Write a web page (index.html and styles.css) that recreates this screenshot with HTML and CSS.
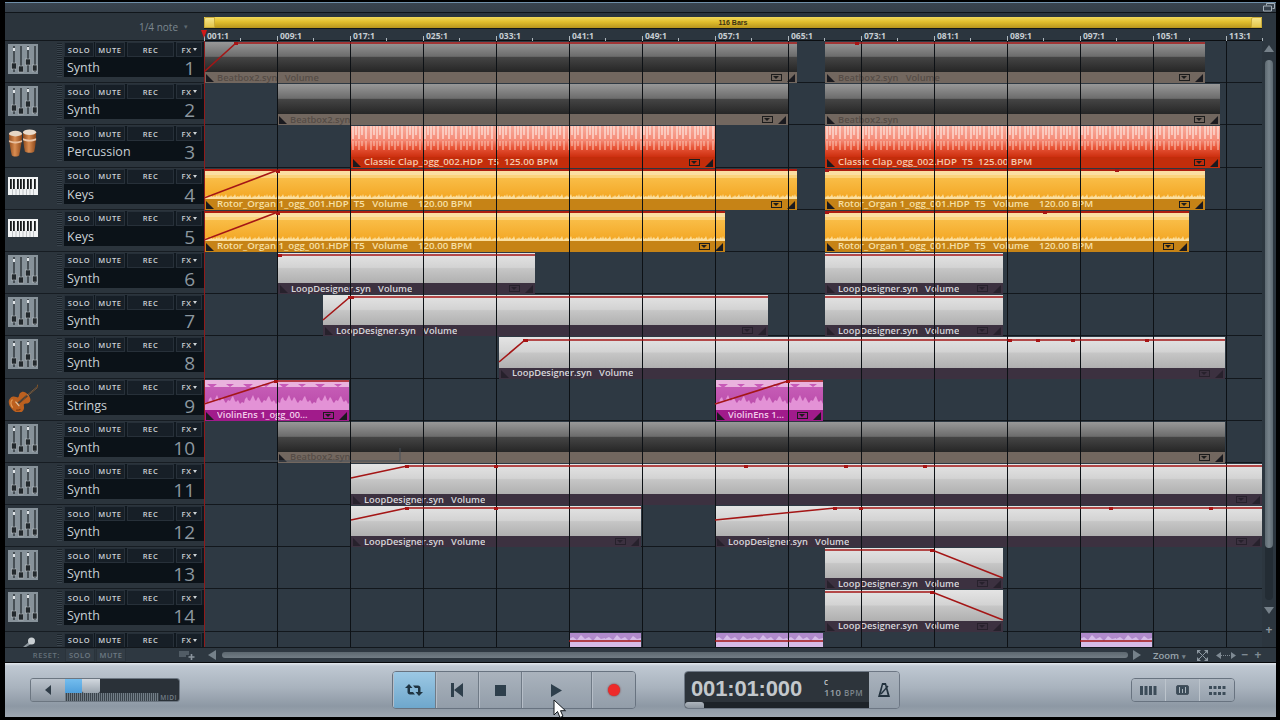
FILE: index.html
```html
<!DOCTYPE html>
<html lang="en">
<head>
<meta charset="utf-8">
<title>Sequencer</title>
<link rel="stylesheet" href="styles.css">
</head>
<body>
<svg class="defs" width="0" height="0" aria-hidden="true">
  <defs>
    <linearGradient id="g-drum" x1="0" x2="1" y1="0" y2="0"><stop offset="0" stop-color="#8f4a1c"/><stop offset=".45" stop-color="#d98d52"/><stop offset="1" stop-color="#8a4518"/></linearGradient>
    <symbol id="i-synth" viewBox="0 0 30 30">
      <rect width="30" height="30" fill="#87929a"/>
      <g stroke="#2c3338" stroke-width="1.4"><path d="M6 2v26M13 2v26M20 2v26M27 2v26"/></g>
      <g fill="#23292d" stroke="#c8ced2" stroke-width=".5"><rect x="3.5" y="19" width="5" height="6"/><rect x="10.5" y="22" width="5" height="6"/><rect x="17.5" y="15" width="5" height="6"/><rect x="24.5" y="21" width="4.5" height="6"/></g>
      <g fill="#dfe3e6"><rect x="5" y="4" width="2" height="3"/><rect x="19" y="3" width="2" height="3"/></g>
    </symbol>
    <symbol id="i-perc" viewBox="0 0 32 30">
      <path d="M1 6c0-4 14-4 14 0 0 8-2 17-3 22-1 2-7 2-8 0C3 23 1 14 1 6z" fill="url(#g-drum)"/>
      <ellipse cx="8" cy="5" rx="7" ry="3" fill="#e6d6c4"/>
      <path d="M1 12c4 2 10 2 14 0v2c-4 2-10 2-14 0z" fill="#e8c0a0"/>
      <path d="M16 4c0-4 14-4 14 0 0 8-1 15-2 20-1 2-8 2-10 0-1-5-2-12-2-20z" fill="url(#g-drum)"/>
      <ellipse cx="23" cy="3.500" rx="7" ry="3" fill="#eadccc"/>
      <path d="M16 10c4 2 10 2 14 0v2c-4 2-10 2-14 0z" fill="#ecc8ac"/>
    </symbol>
    <symbol id="i-keys" viewBox="0 0 30 18">
      <rect width="30" height="18" fill="#f2f4f5"/>
      <g fill="#15181a"><rect x="2" y="2" width="1.800" height="10"/><rect x="5" y="2" width="1.800" height="10"/><rect x="9" y="2" width="1.800" height="10"/><rect x="12" y="2" width="1.800" height="10"/><rect x="15" y="2" width="1.800" height="10"/><rect x="19" y="2" width="1.800" height="10"/><rect x="22" y="2" width="1.800" height="10"/><rect x="26" y="2" width="1.800" height="10"/></g>
      <path d="M4.500 12v6M8 12v6M11.500 12v6M15 12v6M18.500 12v6M22 12v6M25.500 12v6" stroke="#8b9194" stroke-width=".5"/>
    </symbol>
    <symbol id="i-violin" viewBox="0 0 30 30">
      <g transform="translate(-1 3) rotate(50 15 15)">
        <rect x="14" y="-6" width="2" height="16" fill="#3a2412"/>
        <circle cx="15" cy="-7" r="1.700" fill="#8c5a2a"/>
        <path d="M15 7c-5 0-7 2-6.500 5.500.2 1.400 2 2.300 2 3.700 0 1.100-4.500 1.800-4.500 6 0 4.300 4.300 6.300 9 6.300s9-2 9-6.300c0-4.200-4.500-4.900-4.500-6 0-1.400 1.800-2.300 2-3.700C22 9 20 7 15 7z" fill="#bc601f"/>
        <path d="M8.500 22c0 3 3 5 6.500 5" stroke="#e39a55" stroke-width="1.200" fill="none"/>
        <path d="M21 22c0 2-1 3-2 4" stroke="#7e3c10" stroke-width="1.200" fill="none"/>
        <path d="M14 8h2v12h-2z" fill="#2c1a0c"/>
        <path d="M12 21h6" stroke="#e0c9a8" stroke-width="1"/>
        <path d="M14.500 -5v26M15.500 -5v26" stroke="#cfc6b6" stroke-width=".3"/>
      </g>
    </symbol>
    <pattern id="p-orange" width="24" height="8" patternUnits="userSpaceOnUse">
      <path d="M0 6 1 4 2 5 3 3 4 5 6 4 7 2 8 5 10 4 11 5 13 3 14 5 15 2 16 5 18 3 19 5 21 4 22 2 23 5 24 6V7H0z" fill="#fbdf9f"/>
    </pattern>
    <pattern id="p-red" width="18" height="32" patternUnits="userSpaceOnUse">
      <path d="M2 0v13M5 0v9M8 0v13M11 0v9M15 0v13" stroke="#fde0d8" stroke-width="1.300"/>
      <path d="M2 15v9M5 15v5M8 15v9M11 15v5M15 15v9" stroke="#fbc0ae" stroke-width="1.100"/>
    </pattern>
    <pattern id="p-pink" width="36" height="31" patternUnits="userSpaceOnUse">
      <path d="M0 31V24L2 22 4 23 5 19 7 17 8 20 10 21 12 17 13 15 15 20 16 21 18 17 19 18 21 22 22 23 24 20 26 21 28 17 29 16 31 21 32 22 34 20 36 24V31z" fill="#e392d6"/>
      <path d="M3 4l5 4 5-4M22 4l4 3 4-3" fill="#c85ab8"/>
    </pattern>
    <pattern id="p-purple" width="36" height="15" patternUnits="userSpaceOnUse">
      <path d="M0 15V6L4 4 8 7 12 2 16 6 20 4 24 8 28 3 32 6 36 5V15z" fill="#d6bce8"/>
    </pattern>
  </defs>
</svg>

<div class="app">
  <header class="titlebar">
    <svg class="win-icon" viewBox="0 0 12 9" width="12" height="9"><path d="M3.500 2.500V.5h8v5h-2M.5 3h8v5h-8z" fill="none" stroke="#a5b0b9"/></svg>
  </header>

  <div class="head-row">
    <div class="corner"><span class="note">1/4 note</span><span class="caret">▾</span></div>
    <div class="ruler-wrap">
      <div class="loop">
        <span class="loop-end"></span>
        <span class="loop-bars">116 Bars</span>
        <span class="loop-end"></span>
      </div>
      <div class="ruler">
        <span>001:1</span><span>009:1</span><span>017:1</span><span>025:1</span><span>033:1</span><span>041:1</span><span>049:1</span><span>057:1</span><span>065:1</span><span>073:1</span><span>081:1</span><span>089:1</span><span>097:1</span><span>105:1</span><span>113:1</span>
        <i class="playhead-cap"></i>
      </div>
    </div>
    <div class="head-side"></div>
  </div>

  <div class="main">
    <div class="tracks">
      <div class="track"><div class="ticon"><svg class="ic"><use href="#i-synth"/></svg></div><div class="meter"></div><div class="ctl"><div class="btns"><button>SOLO</button><button>MUTE</button><button class="w">REC</button><button class="fx">FX</button></div><div class="nm"><span>Synth</span><b>1</b></div></div></div>
      <div class="track"><div class="ticon"><svg class="ic"><use href="#i-synth"/></svg></div><div class="meter"></div><div class="ctl"><div class="btns"><button>SOLO</button><button>MUTE</button><button class="w">REC</button><button class="fx">FX</button></div><div class="nm"><span>Synth</span><b>2</b></div></div></div>
      <div class="track"><div class="ticon"><svg class="ic"><use href="#i-perc"/></svg></div><div class="meter"></div><div class="ctl"><div class="btns"><button>SOLO</button><button>MUTE</button><button class="w">REC</button><button class="fx">FX</button></div><div class="nm"><span>Percussion</span><b>3</b></div></div></div>
      <div class="track"><div class="ticon"><svg class="ic ic-k"><use href="#i-keys"/></svg></div><div class="meter"></div><div class="ctl"><div class="btns"><button>SOLO</button><button>MUTE</button><button class="w">REC</button><button class="fx">FX</button></div><div class="nm"><span>Keys</span><b>4</b></div></div></div>
      <div class="track"><div class="ticon"><svg class="ic ic-k"><use href="#i-keys"/></svg></div><div class="meter"></div><div class="ctl"><div class="btns"><button>SOLO</button><button>MUTE</button><button class="w">REC</button><button class="fx">FX</button></div><div class="nm"><span>Keys</span><b>5</b></div></div></div>
      <div class="track"><div class="ticon"><svg class="ic"><use href="#i-synth"/></svg></div><div class="meter"></div><div class="ctl"><div class="btns"><button>SOLO</button><button>MUTE</button><button class="w">REC</button><button class="fx">FX</button></div><div class="nm"><span>Synth</span><b>6</b></div></div></div>
      <div class="track"><div class="ticon"><svg class="ic"><use href="#i-synth"/></svg></div><div class="meter"></div><div class="ctl"><div class="btns"><button>SOLO</button><button>MUTE</button><button class="w">REC</button><button class="fx">FX</button></div><div class="nm"><span>Synth</span><b>7</b></div></div></div>
      <div class="track"><div class="ticon"><svg class="ic"><use href="#i-synth"/></svg></div><div class="meter"></div><div class="ctl"><div class="btns"><button>SOLO</button><button>MUTE</button><button class="w">REC</button><button class="fx">FX</button></div><div class="nm"><span>Synth</span><b>8</b></div></div></div>
      <div class="track"><div class="ticon"><svg class="ic"><use href="#i-violin"/></svg></div><div class="meter"></div><div class="ctl"><div class="btns"><button>SOLO</button><button>MUTE</button><button class="w">REC</button><button class="fx">FX</button></div><div class="nm"><span>Strings</span><b>9</b></div></div></div>
      <div class="track"><div class="ticon"><svg class="ic"><use href="#i-synth"/></svg></div><div class="meter"></div><div class="ctl"><div class="btns"><button>SOLO</button><button>MUTE</button><button class="w">REC</button><button class="fx">FX</button></div><div class="nm"><span>Synth</span><b>10</b></div></div></div>
      <div class="track"><div class="ticon"><svg class="ic"><use href="#i-synth"/></svg></div><div class="meter"></div><div class="ctl"><div class="btns"><button>SOLO</button><button>MUTE</button><button class="w">REC</button><button class="fx">FX</button></div><div class="nm"><span>Synth</span><b>11</b></div></div></div>
      <div class="track"><div class="ticon"><svg class="ic"><use href="#i-synth"/></svg></div><div class="meter"></div><div class="ctl"><div class="btns"><button>SOLO</button><button>MUTE</button><button class="w">REC</button><button class="fx">FX</button></div><div class="nm"><span>Synth</span><b>12</b></div></div></div>
      <div class="track"><div class="ticon"><svg class="ic"><use href="#i-synth"/></svg></div><div class="meter"></div><div class="ctl"><div class="btns"><button>SOLO</button><button>MUTE</button><button class="w">REC</button><button class="fx">FX</button></div><div class="nm"><span>Synth</span><b>13</b></div></div></div>
      <div class="track"><div class="ticon"><svg class="ic"><use href="#i-synth"/></svg></div><div class="meter"></div><div class="ctl"><div class="btns"><button>SOLO</button><button>MUTE</button><button class="w">REC</button><button class="fx">FX</button></div><div class="nm"><span>Synth</span><b>14</b></div></div></div>
      <div class="track track-last"><div class="ticon"><svg class="mic" viewBox="0 0 14 10" width="14" height="10"><path d="M1 10l6-5 2 2-5 3z" fill="#8d979e"/><circle cx="9.500" cy="4" r="3.500" fill="#c9cfd3"/></svg></div><div class="meter"></div><div class="ctl"><div class="btns"><button>SOLO</button><button>MUTE</button><button class="w">REC</button><button class="fx">FX</button></div></div></div>
    </div>

    <div class="timeline">
      <div class="lane">
        <div class="clip gray" style="left:0;width:593px"><div class="body"></div><div class="lbl"><span>Beatbox2.syn &nbsp;&nbsp;Volume</span><i class="dd"></i><i class="rz"></i></div></div>
        <div class="clip gray" style="left:621px;width:380px"><div class="body"></div><div class="lbl"><span>Beatbox2.syn &nbsp;&nbsp;Volume</span><i class="dd"></i><i class="rz"></i></div></div>
      </div>
      <div class="lane">
        <div class="clip gray" style="left:73px;width:511px"><div class="body"></div><div class="lbl"><span>Beatbox2.syn</span><i class="dd"></i><i class="rz"></i></div></div>
        <div class="clip gray" style="left:621px;width:395px"><div class="body"></div><div class="lbl"><span>Beatbox2.syn</span><i class="dd"></i><i class="rz"></i></div></div>
      </div>
      <div class="lane">
        <div class="clip red" style="left:147px;width:364px"><div class="body"><svg class="wave"><rect width="100%" height="100%" fill="url(#p-red)"/></svg></div><div class="lbl"><span>Classic Clap_ogg_002.HDP &nbsp;T5 &nbsp;125.00 BPM</span><i class="dd"></i><i class="rz"></i></div></div>
        <div class="clip red" style="left:621px;width:395px"><div class="body"><svg class="wave"><rect width="100%" height="100%" fill="url(#p-red)"/></svg></div><div class="lbl"><span>Classic Clap_ogg_002.HDP &nbsp;T5 &nbsp;125.00 BPM</span><i class="dd"></i><i class="rz"></i></div></div>
      </div>
      <div class="lane">
        <div class="clip orange" style="left:0;width:593px"><div class="body"><svg class="wave"><rect width="100%" height="100%" fill="url(#p-orange)"/></svg></div><div class="lbl"><span>Rotor_Organ 1_ogg_001.HDP &nbsp;T5 &nbsp;&nbsp;Volume &nbsp;&nbsp;&nbsp;120.00 BPM</span><i class="dd"></i><i class="rz"></i></div></div>
        <div class="clip orange" style="left:621px;width:380px"><div class="body"><svg class="wave"><rect width="100%" height="100%" fill="url(#p-orange)"/></svg></div><div class="lbl"><span>Rotor_Organ 1_ogg_001.HDP &nbsp;T5 &nbsp;&nbsp;Volume &nbsp;&nbsp;&nbsp;120.00 BPM</span><i class="dd"></i><i class="rz"></i></div></div>
      </div>
      <div class="lane">
        <div class="clip orange" style="left:0;width:521px"><div class="body"><svg class="wave"><rect width="100%" height="100%" fill="url(#p-orange)"/></svg></div><div class="lbl"><span>Rotor_Organ 1_ogg_001.HDP &nbsp;T5 &nbsp;&nbsp;Volume &nbsp;&nbsp;&nbsp;120.00 BPM</span><i class="dd"></i><i class="rz"></i></div></div>
        <div class="clip orange" style="left:621px;width:364px"><div class="body"><svg class="wave"><rect width="100%" height="100%" fill="url(#p-orange)"/></svg></div><div class="lbl"><span>Rotor_Organ 1_ogg_001.HDP &nbsp;T5 &nbsp;&nbsp;Volume &nbsp;&nbsp;&nbsp;120.00 BPM</span><i class="dd"></i><i class="rz"></i></div></div>
      </div>
      <div class="lane">
        <div class="clip white" style="left:74px;width:257px"><div class="body"></div><div class="lbl"><span>LoopDesigner.syn &nbsp;&nbsp;Volume</span><i class="dd"></i><i class="rz"></i></div></div>
        <div class="clip white" style="left:621px;width:178px"><div class="body"></div><div class="lbl"><span>LoopDesigner.syn &nbsp;&nbsp;Volume</span><i class="dd"></i><i class="rz"></i></div></div>
      </div>
      <div class="lane">
        <div class="clip white" style="left:119px;width:445px"><div class="body"></div><div class="lbl"><span>LoopDesigner.syn &nbsp;&nbsp;Volume</span><i class="dd"></i><i class="rz"></i></div></div>
        <div class="clip white" style="left:621px;width:178px"><div class="body"></div><div class="lbl"><span>LoopDesigner.syn &nbsp;&nbsp;Volume</span><i class="dd"></i><i class="rz"></i></div></div>
      </div>
      <div class="lane">
        <div class="clip white" style="left:295px;width:726px"><div class="body"></div><div class="lbl"><span>LoopDesigner.syn &nbsp;&nbsp;Volume</span><i class="dd"></i><i class="rz"></i></div></div>
      </div>
      <div class="lane">
        <div class="clip pink" style="left:0;width:145px"><div class="body"><svg class="wave"><rect width="100%" height="100%" fill="url(#p-pink)"/></svg></div><div class="lbl"><span>ViolinEns 1_ogg_00...</span><i class="dd"></i><i class="rz"></i></div></div>
        <div class="clip pink" style="left:511px;width:108px"><div class="body"><svg class="wave"><rect width="100%" height="100%" fill="url(#p-pink)"/></svg></div><div class="lbl"><span>ViolinEns 1...</span><i class="dd"></i><i class="rz"></i></div></div>
      </div>
      <div class="lane">
        <div class="clip gray" style="left:73px;width:948px"><div class="body"></div><div class="lbl"><span>Beatbox2.syn</span><i class="dd"></i><i class="rz"></i></div></div>
      </div>
      <div class="lane">
        <div class="clip white" style="left:147px;width:911px"><div class="body"></div><div class="lbl"><span>LoopDesigner.syn &nbsp;&nbsp;Volume</span><i class="dd"></i><i class="rz"></i></div></div>
      </div>
      <div class="lane">
        <div class="clip white" style="left:147px;width:290px"><div class="body"></div><div class="lbl"><span>LoopDesigner.syn &nbsp;&nbsp;Volume</span><i class="dd"></i><i class="rz"></i></div></div>
        <div class="clip white" style="left:511px;width:547px"><div class="body"></div><div class="lbl"><span>LoopDesigner.syn &nbsp;&nbsp;Volume</span><i class="dd"></i><i class="rz"></i></div></div>
      </div>
      <div class="lane">
        <div class="clip white" style="left:621px;width:178px"><div class="body"></div><div class="lbl"><span>LoopDesigner.syn &nbsp;&nbsp;Volume</span><i class="dd"></i><i class="rz"></i></div></div>
      </div>
      <div class="lane">
        <div class="clip white" style="left:621px;width:178px"><div class="body"></div><div class="lbl"><span>LoopDesigner.syn &nbsp;&nbsp;Volume</span><i class="dd"></i><i class="rz"></i></div></div>
      </div>
      <div class="lane lane-last">
        <div class="clip purple" style="left:365px;width:72px"><div class="body"><svg class="wave"><rect width="100%" height="100%" fill="url(#p-purple)"/></svg></div></div>
        <div class="clip purple" style="left:511px;width:108px"><div class="body"><svg class="wave"><rect width="100%" height="100%" fill="url(#p-purple)"/></svg></div></div>
        <div class="clip purple" style="left:876px;width:72px"><div class="body"><svg class="wave"><rect width="100%" height="100%" fill="url(#p-purple)"/></svg></div></div>
      </div>

      <div class="gridlines"></div>

      <svg class="auto" viewBox="204 41 1058 606" width="1058" height="606">
        <path class="ghost" d="M260 461H400V448"/>
        <g class="line">
          <path d="M204 72 236 43H797M825 43H1205"/>
          <path d="M204 198 278 170"/>
          <path d="M204 240 278 212"/>
          <path d="M278 255H535M825 255H1003"/>
          <path d="M323 320 350 297H768M825 297H1003"/>
          <path d="M499 362 525 340H1225"/>
          <path d="M204 404 276 381H349M715 404 788 381H823"/>
          <path d="M351 478 407 466H1262"/>
          <path d="M351 520 407 508H641M715 520 835 508H1262"/>
          <path d="M825 550H932L1003 578"/>
          <path d="M825 592H932L1003 620"/>
          <path d="M569 641H641M715 641H823M1080 641H1152"/>
        </g>
        <g class="node">
          <rect x="234" y="42" width="4" height="3"/><rect x="855" y="42" width="4" height="3"/>
          <rect x="276" y="170" width="4" height="3"/><rect x="825" y="169" width="4" height="3"/><rect x="1115" y="169" width="4" height="3"/>
          <rect x="276" y="212" width="4" height="3"/><rect x="825" y="211" width="4" height="3"/><rect x="1043" y="211" width="4" height="3"/>
          <rect x="278" y="254" width="4" height="3"/><rect x="348" y="296" width="6" height="3"/><rect x="523" y="339" width="5" height="3"/>
          <rect x="1008" y="339" width="4" height="3"/><rect x="1036" y="339" width="4" height="3"/><rect x="1071" y="339" width="4" height="3"/><rect x="1145" y="339" width="4" height="3"/>
          <rect x="274" y="380" width="4" height="3"/><rect x="786" y="380" width="4" height="3"/>
          <rect x="405" y="465" width="4" height="3"/><rect x="494" y="465" width="4" height="3"/><rect x="744" y="465" width="4" height="3"/><rect x="844" y="465" width="4" height="3"/><rect x="923" y="465" width="4" height="3"/>
          <rect x="405" y="507" width="4" height="3"/><rect x="494" y="507" width="4" height="3"/><rect x="833" y="507" width="4" height="3"/><rect x="859" y="507" width="4" height="3"/><rect x="1109" y="507" width="4" height="3"/><rect x="1209" y="507" width="4" height="3"/>
          <rect x="930" y="549" width="4" height="3"/><rect x="930" y="591" width="4" height="3"/>
        </g>
      </svg>
      <div class="playhead"></div>
    </div>

    <div class="vscroll">
      <i class="up"></i>
      <div class="vtrack"><div class="vthumb"></div></div>
      <i class="down"></i>
      <span class="plus">+</span>
    </div>
  </div>

  <div class="foot">
    <div class="foot-left">
      <span class="reset">RESET:</span><button>SOLO</button><button>MUTE</button>
      <svg class="addtrack" viewBox="0 0 16 9" width="16" height="9"><path d="M0 1h10M0 3h10M0 5h7" stroke="#75808a" stroke-width="1.200"/><path d="M12.500 3v6M9.500 6h6" stroke="#8b959e" stroke-width="1.600"/></svg>
    </div>
    <div class="foot-main">
      <i class="arr-l"></i>
      <div class="hscroll"></div>
      <i class="arr-r"></i>
      <span class="zoom">Zoom <em>▾</em></span>
      <svg class="zoom-ic" viewBox="0 0 11 11" width="11" height="11"><path d="M0 0h4L0 4zM11 0H7l4 4zM0 11h4l-4-4zM11 11H7l4-4z" fill="#8d98a1"/><path d="M2 2l7 7M9 2 2 9" stroke="#8d98a1"/></svg>
      <svg class="zoom-ic wide" viewBox="0 0 20 9" width="20" height="9"><path d="M0 4.500 5 1v7zM20 4.500 15 1v7z" fill="#7f8a93"/><path d="M5 4.500h10" stroke="#7f8a93" stroke-dasharray="1 1"/></svg>
      <span class="pm">−</span><span class="pm">+</span>
    </div>
  </div>

  <footer class="transport">
    <div class="vol">
      <div class="vol-btn"><i></i></div>
      <div class="vol-track">
        <div class="vol-top"><span class="vol-fill"></span><span class="vol-thumb"></span></div>
        <div class="vol-bot"><span>MIDI</span></div>
      </div>
    </div>

    <div class="tbtns">
      <div class="tb on"><svg viewBox="0 0 20 14" width="20" height="14"><path d="M5 1 1 5h2.500v4c0 1.500 1 2.500 2.500 2.500h5L9 9H6V5h2.500zM15 13l4-4h-2.500V5c0-1.500-1-2.500-2.500-2.500H9L11 5h3v4h-2.500z" fill="#1f3442"/></svg></div>
      <div class="tb"><svg viewBox="0 0 12 14" width="12" height="14"><path d="M0 0h3v14H0zM12 0v14L3 7z" fill="#2e3f4c"/></svg></div>
      <div class="tb"><i class="stop"></i></div>
      <div class="tb play"><svg viewBox="0 0 11 13" width="11" height="13"><path d="M0 0 11 6.500 0 13z" fill="#2e3f4c"/></svg></div>
      <div class="tb"><i class="rec"></i></div>
    </div>

    <div class="display">
      <div class="disp-main">
        <div class="disp-text"><span class="time">001:01:000</span><span class="bpm"><small>c</small><span>110 <em>BPM</em></span></span></div>
        <div class="disp-bar"><i></i></div>
      </div>
      <div class="metro"><svg viewBox="0 0 12 14" width="12" height="14"><path d="M4 0h4l4 14H0zM2.500 12h7L7 2H5z" fill="#23323e" fill-rule="evenodd"/><path d="M3 11 10 3" stroke="#23323e" stroke-width="1.300"/></svg></div>
    </div>

    <div class="views">
      <div class="vb"><svg viewBox="0 0 17 9" width="17" height="9"><path d="M0 0h3v9H0zM4.500 0h3v9h-3zM9 0h3v9H9zM13.500 0h3v9h-3z" fill="#3c4c59"/></svg></div>
      <div class="vb"><svg viewBox="0 0 13 10" width="13" height="10"><rect x=".5" y=".5" width="12" height="9" rx="1.500" fill="#3c4c59" stroke="#46535e"/><path d="M3.500 2v6M6.500 4v4M9.500 2v6" stroke="#aab4bc"/></svg></div>
      <div class="vb"><svg viewBox="0 0 17 9" width="17" height="9"><path d="M0 0h3v3H0zM4.500 0h3v3h-3zM9 0h3v3H9zM13.500 0h3v3h-3zM0 6h3v3H0zM4.500 6h3v3h-3zM9 6h3v3H9zM13.500 6h3v3h-3z" fill="#3c4c59"/></svg></div>
    </div>
  </footer>
</div>

<svg class="cursor" viewBox="0 0 13 20" width="13" height="20"><path d="M1 1v15l3.500-3.500L7 18.500l3-1.300-2.500-5.500H12.500z" fill="#fff" stroke="#10161b" stroke-width="1"/></svg>
</body>
</html>
```

FILE: styles.css
```css
* { box-sizing: border-box; }
html, body { margin: 0; height: 100%; }
body {
  width: 1280px; height: 720px; overflow: hidden;
  background: #000; padding: 2px 4px 3px 5px;
  font-family: "Open Sans", "Liberation Sans", sans-serif;
  position: relative;
}
button { font: inherit; padding: 0; margin: 0; }
i { display: block; font-style: normal; }
.defs { position: absolute; }

.app { width: 1271px; height: 715px; display: flex; flex-direction: column; }

/* title */
.titlebar {
  height: 11px; flex: none; background: linear-gradient(#6f8ea8 0 1px, #39444f 1px, #343e48);
  border-bottom: 1px solid #10151a; display: flex; justify-content: flex-end; align-items: center; padding-right: 1px;
}
.win-icon { margin-top: 1px; }

/* header */
.head-row { height: 28px; flex: none; display: flex; }
.corner {
  width: 199px; flex: none; background: #2b343c; display: flex; align-items: center; justify-content: flex-end;
  padding: 0 16px 0 0; gap: 6px; color: #7c8890; font-size: 10px; border-bottom: 1px solid #12171c;
}
.corner .caret { font-size: 7px; color: #5e6a72; }
.ruler-wrap { width: 1058px; flex: none; background: #2b353e; display: flex; flex-direction: column; position: relative; }
.head-side { width: 14px; flex: none; background: #2c363f; }
.loop {
  margin-top: 4px; height: 11px; flex: none;
  background: linear-gradient(#f2d95a, #e1bd2c 45%, #b8951c);
  display: flex; justify-content: space-between; align-items: center; position: relative;
  box-shadow: 0 1px 0 #12171c;
}
.loop-end { width: 11px; height: 11px; background: linear-gradient(#f6e58a, #e4c64a); border: 1px solid #c9ab3a; border-radius: 2px 0 0 0; }
.loop-bars { font: bold 7px "Liberation Sans", sans-serif; color: #3b3213; }
.ruler {
  flex: 1; display: grid; grid-template-columns: repeat(15, 73px); align-items: start; padding-top: 3px; position: relative;
  border-bottom: 1px solid #0b0e11; color: #c5ccd2; font: bold 8.500px "Open Sans", sans-serif;
}
.ruler span { padding-left: 3px; line-height: 9px; position: relative; }
.ruler span::before { content: ""; position: absolute; left: 0; top: 5px; width: 1px; height: 5px; background: #aeb7bd; }
.ruler span::after { content: ""; position: absolute; left: 36px; top: 7px; width: 1px; height: 3px; background: #aeb7bd; }
.playhead-cap { position: absolute; left: -3px; top: 2px; width: 0; height: 0; border: 3px solid transparent; border-top: 8px solid #d01919; border-bottom: 0; }

/* main */
.main { height: 606px; flex: none; display: flex; }
.tracks { width: 199px; flex: none; background: #2b343c; display: flex; flex-direction: column; overflow: hidden; }
.track { height: 42.2px; flex: none; display: flex; position: relative; border-bottom: 1px solid #161c22; padding-top: 1px; }
.track-last { height: 15px; border-bottom: 0; }
.ticon { width: 52px; flex: none; padding: 2px 0 2px 3px; }
.ic { width: 30px; height: 30px; display: block; }
.ic-k { height: 18px; margin-top: 6px; }
.mic { display: block; margin: 2px 0 0 14px; }
.meter {
  width: 5px; flex: none; height: 34px; margin-top: 1px;
  background: repeating-linear-gradient(#1c242b 0 1px, #3a444d 1px 2px);
}
.track-last .meter { height: 12px; }
.ctl { margin-left: 2px; width: 140px; flex: none; height: 35px; background: #0b1218; display: flex; flex-direction: column; }
.track-last .ctl { height: 14px; background: #1a232a; }
.btns { height: 15px; flex: none; display: flex; gap: 1px; background: #10181f; }
.btns button {
  width: 30px; height: 15px; background: #171f27; border: 1px solid #273039; color: #ced3d7;
  font: 600 7.500px "Open Sans", sans-serif; letter-spacing: .6px;
}
.btns button.w { width: 47px; margin-left: 1px; }
.btns button.fx { width: 26px; margin-left: 1px; padding-right: 5px; position: relative; }
.btns button.fx::after {
  content: ""; position: absolute; right: 4px; top: 5px; width: 0; height: 0;
  border-left: 2px solid transparent; border-right: 2px solid transparent; border-top: 3px solid #ced3d7;
}
.nm { flex: 1; display: flex; justify-content: space-between; align-items: center; padding: 0 9px 0 3px; }
.nm span { color: #c9d0d5; font-size: 12.500px; }
.nm b { font-weight: 400; color: #8c979f; font-size: 19px; line-height: 20px; margin-top: 1px; }

/* timeline */
.timeline { width: 1058px; flex: none; background: #2e3943; position: relative; overflow: hidden; display: flex; flex-direction: column; }
.lane { height: 42.2px; flex: none; position: relative; border-bottom: 1px solid #12171c; }
.lane-last { height: 15px; border-bottom: 0; }
.clip { position: absolute; top: 1px; bottom: -1px; display: flex; flex-direction: column; overflow: hidden; z-index: 1; }
.body { flex: 1; position: relative; min-height: 0; }
.wave { position: absolute; inset: 0; width: 100%; height: 100%; }
.lbl {
  height: 11px; flex: none; position: relative; display: flex; align-items: center;
  padding: 0 0 1px 13px; font: 600 9.300px "Open Sans", sans-serif; white-space: nowrap;
}
.lbl::before {
  content: ""; position: absolute; left: 2px; bottom: 1px; width: 0; height: 0;
  border-left: 8px solid #1a1a1f; border-top: 8px solid transparent;
}
.lbl span { overflow: hidden; }
.dd { position: absolute; right: 15px; top: 2px; width: 11px; height: 7px; border: 1px solid #1c1c1c; }
.dd::after {
  content: ""; position: absolute; left: 1px; top: 1px; width: 0; height: 0;
  border-left: 3.500px solid transparent; border-right: 3.500px solid transparent; border-top: 3.500px solid #1c1c1c;
}
.rz {
  position: absolute; right: 2px; bottom: 1px; width: 0; height: 0;
  border-right: 8px solid #1a1a1f; border-top: 8px solid transparent;
}

.gray .body { background: linear-gradient(#989898 0, #6c6c6c 48%, #454545 50%, #262626 100%); }
.gray .lbl { background: #72675f; color: #554c46; }
.red .body { background: linear-gradient(#f8ab9c, #f58c78 45%, #e9573a 68%, #cd2f0f); }
.red .lbl { background: #c32d0b; color: #f6c8ac; font-size: 9.700px; }
.orange { border-top: 2px solid #ad1d10; }
.orange .body { background: linear-gradient(#fbdea2 0 4px, #fbd27c 4px 7px, #f9bd47 7px, #f3a623 100%); }
.orange .wave { top: 21px; height: 8px; }
.orange .lbl { background: #c68316; color: #f7e0a6; font-size: 9.700px; }
.white .body { background: linear-gradient(#e4e4e4, #d3d3d3 48%, #c6c6c6 52%, #b0b0b0); }
.white .lbl { background: #3c3140; color: #d6d6da; }
.white .lbl::before, .white .rz { border-left-color: #27212c; border-right-color: #27212c; }
.white .dd { border-color: #27212c; }
.white .dd::after { border-top-color: #27212c; }
.pink .body { background: linear-gradient(#eab2de 0 22%, #c65cb6 22%, #b94aa9 100%); }
.pink .lbl { background: #a11b8b; color: #f3cdea; }
.purple { background: #b78fce; }
.purple .body { background: #b08acb; }

.gridlines {
  position: absolute; inset: 0; pointer-events: none; z-index: 2;
  background: linear-gradient(90deg, #0d1115 1px, transparent 1px) 0 0/73px 100%;
}
.auto { position: absolute; left: 0; top: 0; pointer-events: none; z-index: 3; }
.auto .line path { fill: none; stroke: #a41616; stroke-width: 1.600; }
.auto .node { fill: #a81414; }
.auto .ghost { fill: none; stroke: #46505a; stroke-width: 1; }
.playhead { position: absolute; left: -1px; top: 0; bottom: 0; width: 2px; background: #8e1c1c; z-index: 4; }

/* vertical scroll */
.vscroll { width: 14px; flex: none; background: #2c363f; display: flex; flex-direction: column; align-items: center; padding-top: 4px; position: relative; }
.up { width: 0; height: 0; flex: none; border: 5px solid transparent; border-bottom: 7px solid #76818a; border-top: 0; }
.vtrack { width: 8px; height: 540px; margin-top: 8px; background: #232c34; border-radius: 4px; flex: none; }
.vthumb { width: 8px; height: 488px; border-radius: 4px; background: linear-gradient(90deg, #5d6971, #77838b 50%, #5d6971); }
.down { width: 0; height: 0; flex: none; margin-top: 7px; border: 5px solid transparent; border-top: 7px solid #76818a; border-bottom: 0; }
.plus { color: #8b959e; font-size: 12px; line-height: 16px; font-weight: 700; margin-top: 8px; }

/* foot */
.foot { height: 15px; flex: none; display: flex; background: #2e3841; border-top: 1px solid #12171c; }
.foot-left { width: 199px; flex: none; display: flex; align-items: center; position: relative; }
.reset { width: 60px; text-align: right; padding-right: 5px; font: 600 7.500px "Open Sans", sans-serif; letter-spacing: .6px; color: #66727b; }
.foot-left button {
  width: 30px; height: 14px; margin-right: 1px; background: #333d46; border: 1px solid #2a333b; color: #6d7982;
  font: 600 7.500px "Open Sans", sans-serif; letter-spacing: .5px;
}
.addtrack { margin-left: 52px; }
.foot-main { flex: 1; display: flex; align-items: center; padding-left: 2px; color: #9aa5ad; }
.arr-l { width: 0; height: 0; margin-left: 2px; border: 5px solid transparent; border-right: 8px solid #75818a; border-left: 0; }
.hscroll { width: 906px; height: 6px; margin-left: 6px; border-radius: 3px; background: linear-gradient(#5d6870, #727d85); flex: none; }
.arr-r { width: 0; height: 0; margin-left: 5px; border: 5px solid transparent; border-left: 8px solid #75818a; border-right: 0; }
.zoom { margin-left: 12px; font: 600 9.500px "Open Sans", sans-serif; width: 41px; flex: none; white-space: nowrap; }
.zoom em { font-style: normal; font-size: 7px; color: #76818a; }
.zoom-ic { flex: none; margin-left: 3px; }
.zoom-ic.wide { margin-left: 8px; }
.pm { width: 12px; margin-left: 3px; text-align: center; font-size: 12px; line-height: 12px; font-weight: 700; color: #7f8a93; flex: none; }
.pm + .pm { margin-left: 1px; }

/* transport */
.transport {
  height: 55px; flex: none; position: relative; display: flex; align-items: center;
  background: linear-gradient(#e3e8ee 0, #bfc8d2 3px, #a9b3be 45%, #8d98a4 80%, #9ea7b1 100%);
  border-top: 1px solid #06080a; padding-left: 25px;
}
.vol { width: 150px; height: 24px; flex: none; display: flex; border-radius: 3px; overflow: hidden; border: 1px solid #6c7681; }
.vol-btn { width: 34px; flex: none; background: linear-gradient(#bbc3cc, #8b95a0); display: flex; align-items: center; justify-content: center; }
.vol-btn i { width: 0; height: 0; border: 5px solid transparent; border-right: 6px solid #2f3c47; border-left: 0; }
.vol-track { flex: 1; background: #2a3138; display: flex; flex-direction: column; }
.vol-top { height: 14px; display: flex; flex: none; }
.vol-fill { width: 17px; background: linear-gradient(#74bdee, #4f9fdb); }
.vol-thumb { width: 18px; background: linear-gradient(#d2d8df, #9aa4ae); border-radius: 0 0 2px 2px; }
.vol-bot {
  flex: 1; display: flex; justify-content: flex-end; align-items: center; padding-right: 2px;
  background: repeating-linear-gradient(90deg, #727d86 0 1px, #3b444c 1px 2px) 0 0/94px 100% no-repeat;
}
.vol-bot span { font: 600 6.500px "Open Sans", sans-serif; letter-spacing: .5px; color: #737e87; }

.tbtns { margin-left: 212px; height: 38px; display: flex; flex: none; border: 1px solid #687380; border-radius: 4px; overflow: hidden; }
.tb {
  width: 43px; flex: none; display: flex; align-items: center; justify-content: center;
  background: linear-gradient(#aab3bd, #929da9); border-right: 1px solid #6f7a86; box-shadow: inset 1px 0 0 #b6bec8;
}
.tb:last-child { border-right: 0; }
.tb.play { width: 70px; }
.tb.on { background: linear-gradient(#9cc8e4, #6ea7cc); }
.stop { width: 11px; height: 11px; background: #2e3f4c; }
.rec { width: 12px; height: 12px; border-radius: 50%; background: #ee2a2a; box-shadow: 0 0 2px #7c2020; }

.display { margin-left: 48px; display: flex; height: 38px; flex: none; border-radius: 4px; overflow: hidden; border: 1px solid #6d7784; }
.disp-main { width: 184px; background: #2d343b; display: flex; flex-direction: column; }
.disp-text { flex: 1; display: flex; align-items: center; padding: 4px 0 0 6px; color: #c3c8cc; }
.time { font: bold 22px "Liberation Sans", sans-serif; letter-spacing: -.15px; width: 133px; flex: none; }
.bpm { font: 600 9.500px "Open Sans", sans-serif; color: #9aa2a8; display: flex; flex-direction: column; white-space: nowrap; letter-spacing: .3px; margin-top: -3px; }
.bpm small { font-size: 8px; line-height: 11px; color: #c3c8cc; }
.bpm span { line-height: 12px; }
.bpm em { font-style: normal; font-size: 8px; color: #7c858c; letter-spacing: .5px; }
.disp-bar { height: 8px; flex: none; background: #1d2329; }
.disp-bar i { width: 19px; height: 8px; border-radius: 3px; background: linear-gradient(#aeb6be, #828c96); }
.metro { width: 30px; background: linear-gradient(#aab3bd, #929da9); display: flex; align-items: center; justify-content: center; }

.views { margin-left: 231px; height: 24px; display: flex; flex: none; border: 1px solid #687380; border-radius: 4px; overflow: hidden; }
.vb { width: 34px; flex: none; display: flex; align-items: center; justify-content: center; background: linear-gradient(#aeb7c1, #96a1ad); border-right: 1px solid #bcc4cc; }
.vb:last-child { border-right: 0; }

.cursor { position: absolute; left: 553px; top: 699px; pointer-events: none; }
```
